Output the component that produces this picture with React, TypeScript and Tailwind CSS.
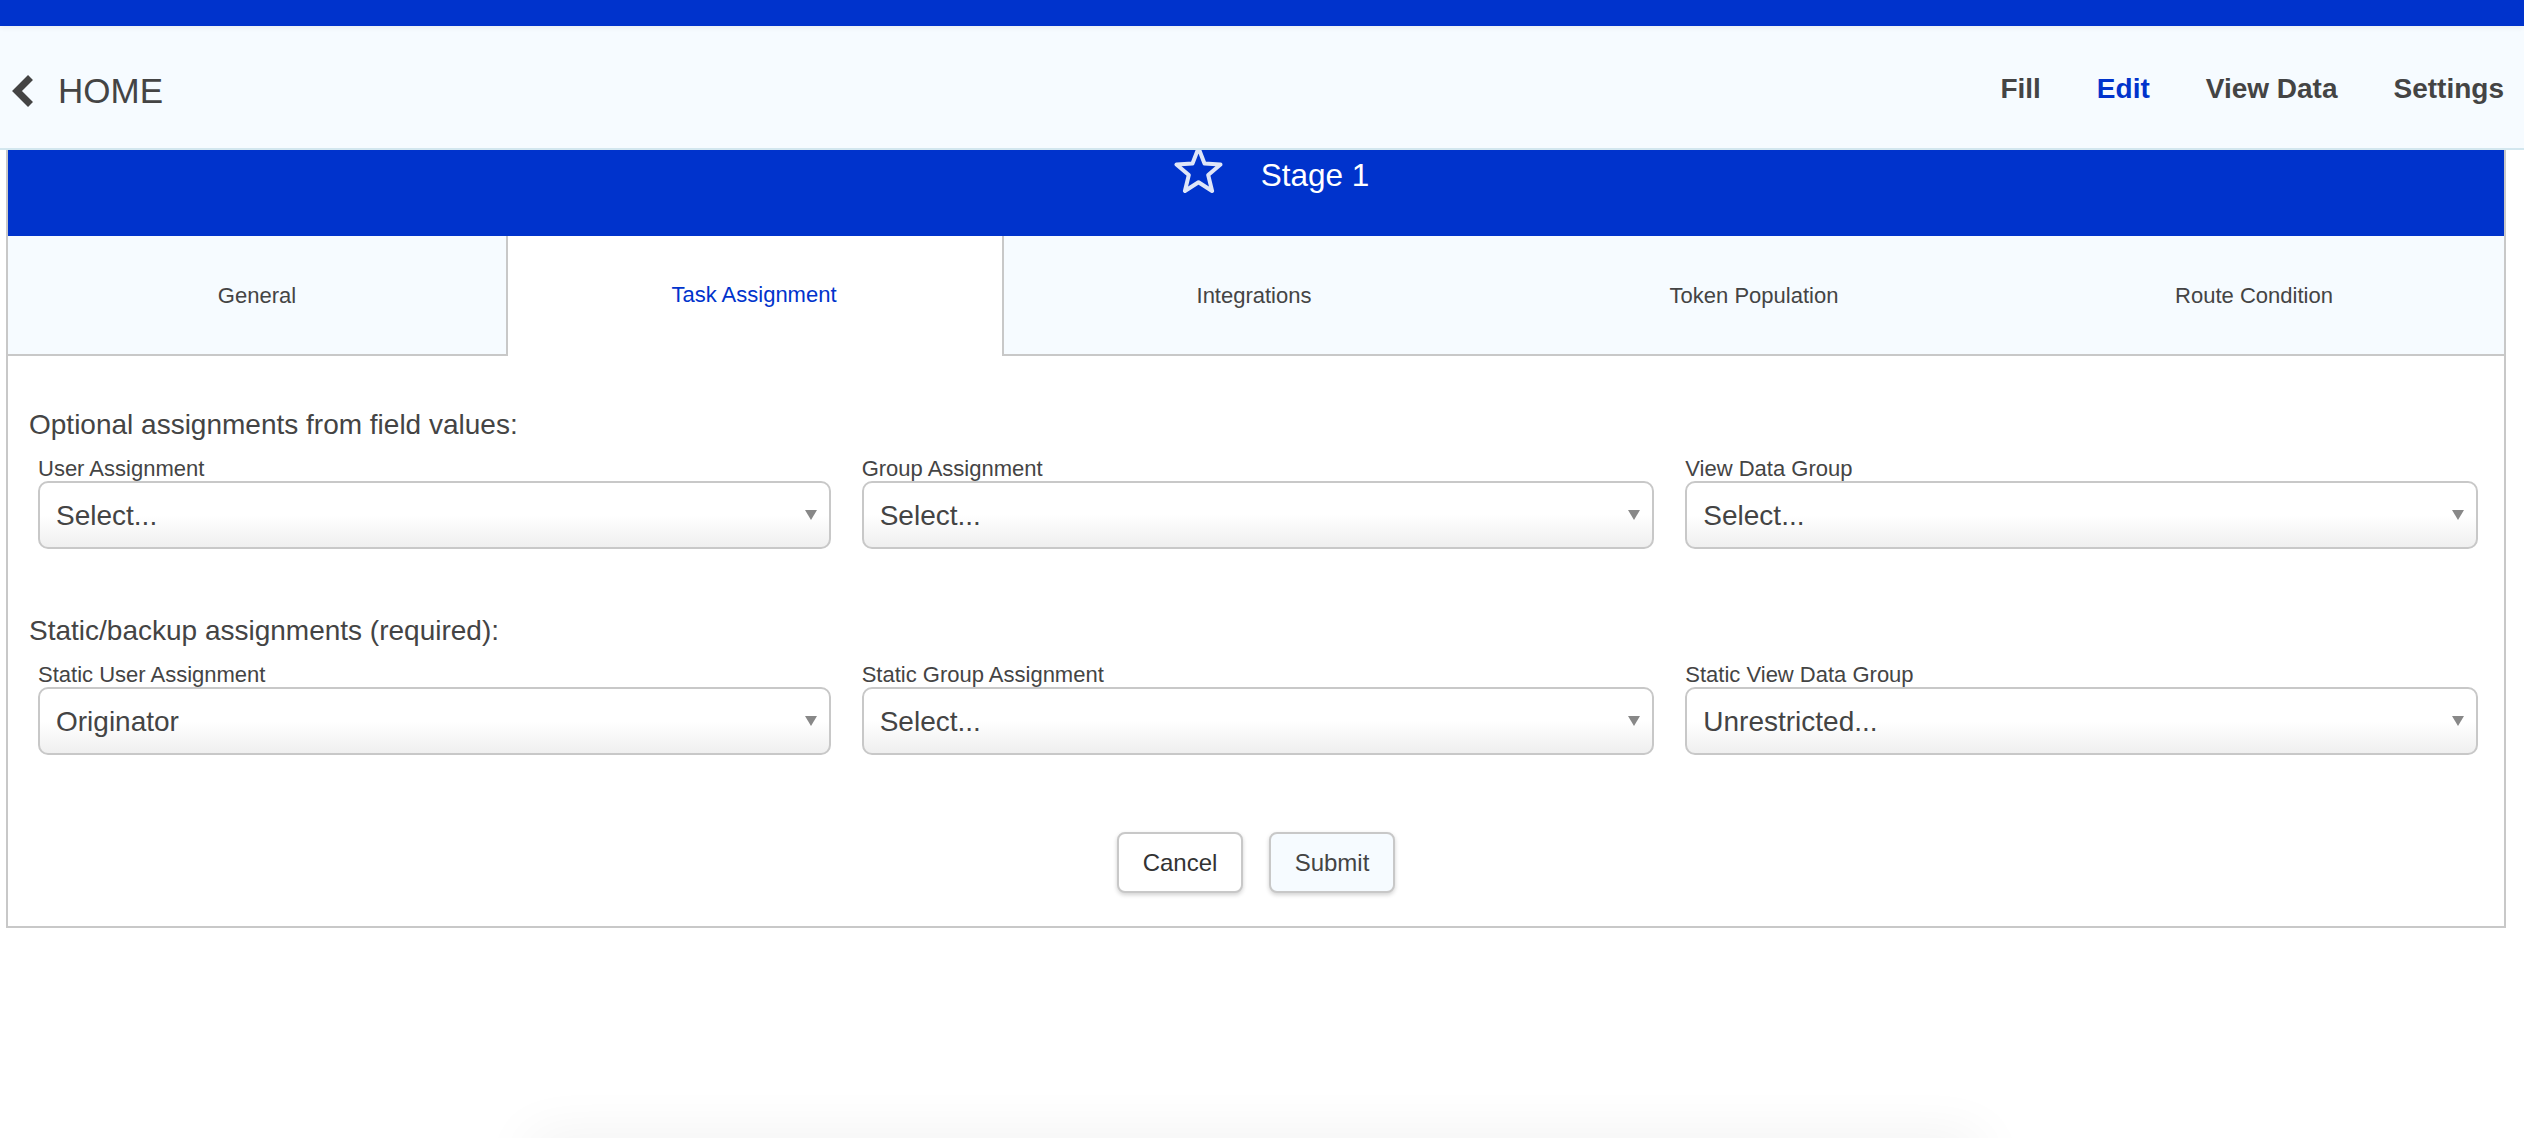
import React from "react";

function Arrow() {
  return (
    <svg width="12" height="10" viewBox="0 0 12 10" className="shrink-0">
      <polygon points="0,0 12,0 6,10" fill="#888888" />
    </svg>
  );
}

function Field({ label, value }: { label: string; value: string }) {
  return (
    <div className="flex flex-col">
      <label className="h-[26px] text-[22px] leading-[28px] text-[#444444]">{label}</label>
      <div className="flex h-[68px] items-center justify-between rounded-[10px] border-2 border-[#c8c8c8] bg-[linear-gradient(to_bottom,#ffffff_50%,#efefef_100%)] pl-[16px] pr-[12px]">
        <span className="pt-[2px] text-[28px] leading-[34px] text-[#444444]">{value}</span>
        <Arrow />
      </div>
    </div>
  );
}

function Section({ title, fields, className }: { title: string; fields: [string, string][]; className: string }) {
  return (
    <section className={className}>
      <h2 className="text-[28px] font-normal leading-[34px] text-[#444444]">{title}</h2>
      <div className="mt-[13px] ml-[9px] mr-[5px] grid grid-cols-3 gap-x-[31px]">
        {fields.map(([l, v]) => (
          <Field key={l} label={l} value={v} />
        ))}
      </div>
    </section>
  );
}

export default function App() {
  return (
    <div className="relative h-[1138px] w-full overflow-hidden bg-white font-['Liberation_Sans',Arial,sans-serif]">
      <div className="relative z-20 h-[26px] bg-[#0033cc] shadow-[0_2px_5px_rgba(0,0,0,0.05)]" />
      <header className="relative z-10 flex h-[124px] items-center justify-between border-b-2 border-[#d3e7ef] bg-[#f6fbff] pl-[11px] pr-[20px]">
        <a className="mt-[8px] flex items-center gap-[25px] text-[#444444]">
          <svg width="22" height="32" viewBox="0 0 22 32">
            <path d="M19.5 2.5 L6 16 L19.5 29.5" fill="none" stroke="#444444" strokeWidth="7" strokeLinejoin="miter" />
          </svg>
          <span className="text-[35px] leading-[40px]">HOME</span>
        </a>
        <nav className="flex items-center gap-[56px] pt-[3px] text-[28px] font-bold leading-[34px] text-[#444444]">
          <a>Fill</a>
          <a className="text-[#0033cc]">Edit</a>
          <a>View Data</a>
          <a>Settings</a>
        </nav>
      </header>

      <main className="ml-[6px] mr-[18px] border-x-2 border-b-2 border-[#c8c8c8]">
        <div className="flex h-[86px] justify-center gap-[38px] bg-[#0033cc] pl-[31px] text-white">
          <svg width="49" height="50" viewBox="0 0 48 50" className="-mt-[5px] blur-[0.6px]">
            <polygon
              points="24,3 30,18.4 46,19.5 33.7,30 37.6,46 24,37.2 10.4,46 14.3,30 2,19.5 18,18.4"
              fill="none"
              stroke="#dfe6f8"
              strokeWidth="4"
              strokeLinejoin="round"
            />
          </svg>
          <span className="mt-[7px] text-[31.5px] leading-[36px]">Stage 1</span>
        </div>

        <div className="flex h-[120px] text-[22px] leading-[26px] text-[#444444]">
          <div className="flex w-[500px] items-center justify-center border-r-2 border-b-2 border-[#c8c8c8] bg-[#f6fbff] pt-[2px]">General</div>
          <div className="flex w-[496px] items-center justify-center border-r-2 border-[#c8c8c8] bg-white pr-[2px] pb-[2px] text-[#0033cc]">Task Assignment</div>
          <div className="flex flex-1 items-center justify-center border-b-2 border-[#c8c8c8] bg-[#f6fbff] pt-[2px]">Integrations</div>
          <div className="flex flex-1 items-center justify-center border-b-2 border-[#c8c8c8] bg-[#f6fbff] pt-[2px]">Token Population</div>
          <div className="flex flex-1 items-center justify-center border-b-2 border-[#c8c8c8] bg-[#f6fbff] pt-[2px]">Route Condition</div>
        </div>

        <div className="px-[21px] pt-[52px] pb-[33px]">
          <Section
            className=""
            title="Optional assignments from field values:"
            fields={[
              ["User Assignment", "Select..."],
              ["Group Assignment", "Select..."],
              ["View Data Group", "Select..."],
            ]}
          />
          <Section
            className="mt-[65px]"
            title="Static/backup assignments (required):"
            fields={[
              ["Static User Assignment", "Originator"],
              ["Static Group Assignment", "Select..."],
              ["Static View Data Group", "Unrestricted..."],
            ]}
          />
          <div className="mt-[77px] flex justify-center gap-[26px] text-[24px] leading-[28px] text-[#333333]">
            <button className="h-[61px] w-[126px] rounded-[8px] border-2 border-[#c8c8c8] bg-white shadow-[0_2px_4px_rgba(0,0,0,0.18)]">Cancel</button>
            <button className="h-[61px] w-[126px] rounded-[8px] border-2 border-[#c8c8c8] bg-[#f6fbff] text-[#444444] shadow-[0_2px_4px_rgba(0,0,0,0.18)]">Submit</button>
          </div>
        </div>
      </main>

      <div className="absolute left-[530px] top-[1138px] h-[40px] w-[1450px] shadow-[0_0_56px_rgba(0,0,0,0.07)]" />
    </div>
  );
}
